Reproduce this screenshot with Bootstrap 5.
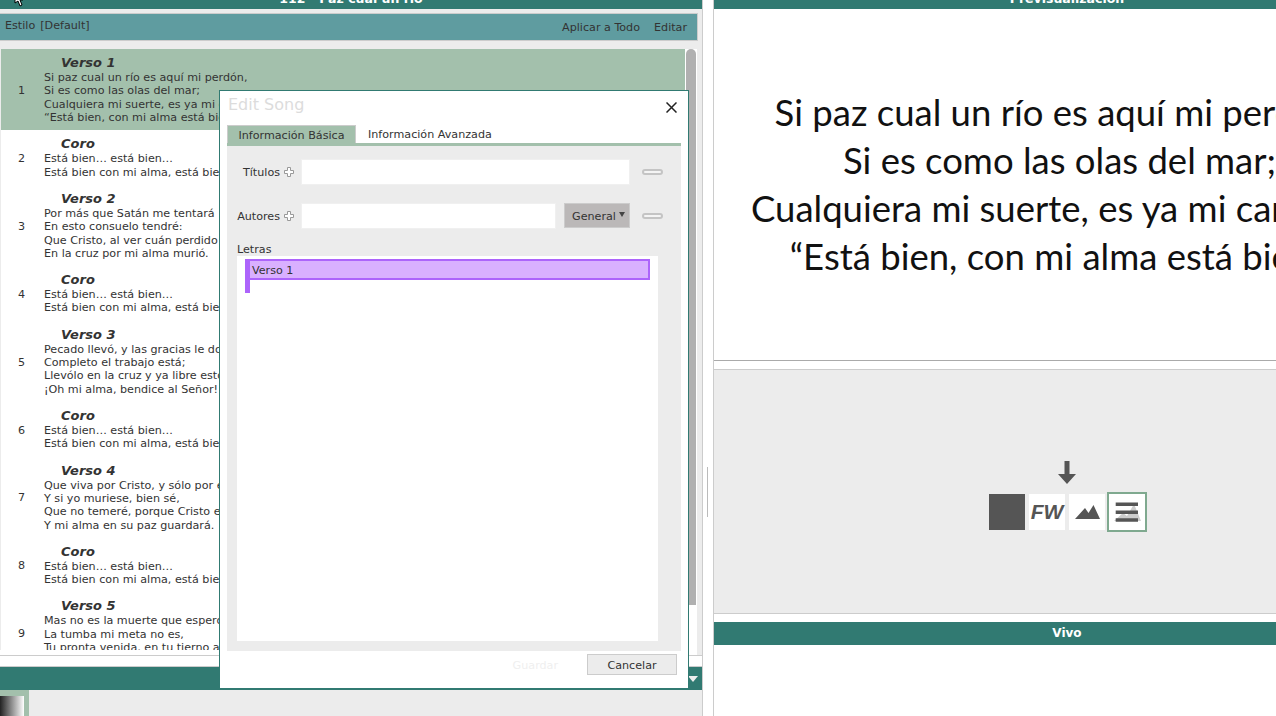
<!DOCTYPE html>
<html lang="es">
<head>
    <meta charset="UTF-8">
    <title>Editor</title>
    <link href="https://cdn.jsdelivr.net/npm/bootstrap@5.3.3/dist/css/bootstrap.min.css" rel="stylesheet">
    <style>
        html, body { height: 716px; overflow: hidden; }
        body { font: 11.15px/13.33px "DejaVu Sans", sans-serif; color: #333; background: #fff; }
        .app-shell { width: 1276px; height: 716px; }
        .left-pane { width: 703px; height: 716px; background: #ececec; border-right: 1px solid #ccc; }
        .splitter { width: 10px; height: 716px; background: #fff; }
        .grip { width: 1px; height: 50px; background: #bbb; margin: 467px 0 0 4px; }
        .right-pane { width: 563px; height: 716px; border-left: 1px solid #ccc; overflow: hidden; }
        .right-inner { width: 706px; }
        .title-strip { height: 9px; background: #317a72; color: #fff; font-weight: 700; font-size: 12.5px; overflow: hidden; padding-bottom: 4px; }
        .style-bar { height: 28px; margin: 4px 4px 8px 0; padding: 5px 10px 0 5px; background: #5f9ca0; border: 1px solid #ccc; border-left: 0; }
        .style-bar .opts { margin-top: 2px; gap: 14px; }
        .style-name { gap: 5px; }
        .song-area { height: 606px; width: 697px; background: #fff; }
        .song-list { width: 686px; height: 601px; overflow: hidden; }
        .song-row { width: 685px; border-left: 1px solid #ececec; }
        .song-row.is-current { background: #a3c0ac; }
        .row-num { width: 43px; padding: 2px 0 0 17px; }
        .row-head { padding-left: 17px; font-size: 13px; font-weight: 700; font-style: italic; line-height: 14px; margin-bottom: 1px; }
        .row-body { padding: 7px 0 5.95px; }
        .row-body .ln { white-space: nowrap; }
        .scroll-track { width: 11px; padding-right: 1px; }
        .scroll-thumb { width: 10px; height: 556px; background: #b0b0b0; border-radius: 5px 5px 0 0; }
        .list-end { height: 11px; background: #fff; border-top: 1px solid #ccc; }
        .teal-strip { height: 24px; background: #317a72; border-top: 1px solid #ccc; }
        .tri-down { width: 0; height: 0; border-left: 5px solid transparent; border-right: 5px solid transparent; border-top: 6px solid #eee; margin-right: 4px; }
        .thumb-box { width: 29px; height: 26px; background: #a3c0ac; padding: 6px 5px 0 0; }
        .thumb-fill { height: 20px; background: linear-gradient(to right, #222, #fff); }
        .edit-box { position: absolute; left: 219px; top: 90px; width: 470px; height: 600px; background: #fff; border: 1px solid #317a72; border-bottom-width: 2px; padding: 0 7px; }
        .edit-title { font-size: 16px; line-height: 20px; color: #dcdcdc; margin: 4px 0 0 1px; }
        .close-x { position: absolute; right: 11px; top: 11px; }
        .tab-row { margin-top: 10px; height: 18px; }
        .tab-on { width: 129px; height: 18px; background: #a3c0ac; border: 1px solid #ccc; border-bottom: 0; text-align: center; padding-top: 3px; }
        .tab-off { padding: 3px 0 0 12px; }
        .form-panel { width: 454px; height: 508px; background: #ececec; border-top: 3px solid #a3c0ac; padding: 13px 10px 10px; }
        .field-line { height: 26px; }
        .field-line + .field-line { margin-top: 18px; }
        .field-lbl { width: 64px; }
        .field-name { width: 43px; text-align: right; padding-top: 1px; }
        .fake-input { height: 26px; background: #fff; border: 1px solid #f0f0f0; }
        .genre-btn { width: 66px; height: 25px; margin-left: 8px; background: #bbb8b8; border: 1px solid #ccc; padding: 6px 0 0 7px; position: relative; }
        .genre-btn::after { content: ""; position: absolute; right: 4px; top: 8px; border-left: 3px solid transparent; border-right: 3px solid transparent; border-top: 5px solid #444; }
        .pill-btn { width: 21px; height: 6px; margin: 0 0 0 12px; background: #f4f4f4; border: 2px solid #c4c4c4; border-radius: 3px; }
        .lyrics-lbl { margin-top: 14px; height: 13px; }
        .lyrics-box { width: 421px; height: 385px; background: #fff; padding: 3px 8px; }
        .verse-flag { width: 405px; }
        .verse-item { height: 21px; background: #d9b0ff; border: 2px solid #ad64fb; border-left-width: 5px; padding: 3px 0 0 2px; }
        .verse-tail { width: 5px; height: 13px; background: #ad64fb; }
        .edit-foot { height: 37px; padding: 3px 4px 0 0; }
        .ghost-btn { color: #efefef; margin: 5px 29px 0 0; }
        .cancel-btn { width: 90px; height: 21px; background: #ececec; border: 1px solid #ccc; text-align: center; padding-top: 4px; }
        .preview-top { height: 352px; overflow: hidden; background: #fff; border-bottom: 1px solid #aaa; }
        .preview-text { width: 691px; margin-top: 79px; text-align: center; font: 36.5px/48px Lato, sans-serif; color: #111; white-space: nowrap; }
        .tools-gap { height: 8px; }
        .tool-panel { height: 245px; background: #ececec; border-top: 1px solid #ccc; border-bottom: 1px solid #ccc; padding-top: 88px; }
        .tool-row { margin-left: 275px; width: 158px; }
        .arrow-slot { height: 36px; padding: 3px 2px 0 0; text-align: center; }
        .tool-tile { width: 36px; height: 36px; background: #fff; margin-right: 4px; }
        .tool-tile.dark { background: #555; }
        .tool-tile.picked { width: 40px; height: 40px; border: 2px solid #7fa98f; margin: -2px 0 -2px -2px; }
        .fw-mark { font: italic 700 21px/36px "Liberation Sans", sans-serif; color: #555; text-align: center; }
        .vivo-bar { height: 23px; margin-top: 8px; background: #317a72; color: #fff; font-weight: 700; font-size: 12px; line-height: 23px; text-align: center; }
        .cursor-mark { position: absolute; left: 14px; top: -9px; }
    </style>
</head>
<body>
<div class="app-shell d-flex position-relative">

    <!-- song list side -->
    <div class="left-pane flex-shrink-0">
        <div class="title-strip d-flex justify-content-center align-items-end"><span class="flex-shrink-0">112 - Paz cual un río</span></div>
        <div class="style-bar d-flex justify-content-between">
            <span class="style-name d-flex"><span>Estilo</span><span>[Default]</span></span>
            <span class="opts d-flex"><span>Aplicar a Todo</span><span>Editar</span></span>
        </div>
        <div class="song-area d-flex">
            <div class="song-list" id="song-list"></div>
            <div class="scroll-track"><div class="scroll-thumb"></div></div>
        </div>
        <div class="list-end"></div>
        <div class="teal-strip d-flex justify-content-end align-items-center"><div class="tri-down"></div></div>
        <div class="thumb-box"><div class="thumb-fill"></div></div>
    </div>

    <div class="splitter flex-shrink-0"><div class="grip"></div></div>

    <!-- preview side -->
    <div class="right-pane flex-shrink-0">
        <div class="right-inner">
            <div class="title-strip d-flex justify-content-center align-items-end"><span class="flex-shrink-0">Previsualización</span></div>
            <div class="preview-top">
                <div class="preview-text">
                    Si paz cual un río es aquí mi perdón,<br>
                    Si es como las olas del mar;<br>
                    Cualquiera mi suerte, es ya mi canción:<br>
                    “Está bien, con mi alma está bien.”
                </div>
            </div>
            <div class="tools-gap"></div>
            <div class="tool-panel">
                <div class="tool-row">
                    <div class="arrow-slot">
                        <svg width="18" height="23" viewBox="0 0 18 23"><path d="M6.500 0h5v13H18l-9 10-9-10h6.500z" fill="#555"/></svg>
                    </div>
                    <div class="d-flex">
                        <div class="tool-tile dark"></div>
                        <div class="tool-tile fw-mark">FW</div>
                        <div class="tool-tile">
                            <svg width="36" height="36" viewBox="0 0 36 36"><path d="M6 25 16 14l3.500 5 5-8L31 25z" fill="#555"/></svg>
                        </div>
                        <div class="tool-tile picked">
                            <svg class="d-block" width="36" height="36" viewBox="0 0 36 36">
                                <path d="M5 27l9-8 4 3 7-12 7 17z" fill="#ccc"/>
                                <path d="M6.700 8.500H29V12H6.700zM6.700 16.500H29V20H6.700zM6.700 24.300H29v3.500H6.700z" fill="#555"/>
                            </svg>
                        </div>
                    </div>
                </div>
            </div>
            <div class="vivo-bar">Vivo</div>
        </div>
    </div>

    <!-- edit song dialog -->
    <div class="edit-box">
        <div class="edit-title">Edit Song</div>
        <svg class="close-x" width="11" height="11" viewBox="0 0 11 11"><path d="M.5.5l10 10M10.500.5l-10 10" stroke="#222" stroke-width="1.500"/></svg>
        <div class="tab-row d-flex">
            <div class="tab-on">Información Básica</div>
            <div class="tab-off">Información Avanzada</div>
        </div>
        <div class="form-panel">
            <div class="field-line d-flex align-items-center">
                <div class="field-lbl d-flex align-items-center"><span class="field-name">Títulos</span>
                    <svg width="10" height="10" viewBox="0 0 10 10" class="ms-1"><path d="M3.500.5h3v3h3v3h-3v3h-3v-3h-3v-3h3z" fill="#fff" stroke="#999"/></svg>
                </div>
                <div class="fake-input" style="width:329px"></div>
                <div class="pill-btn"></div>
            </div>
            <div class="field-line d-flex align-items-center">
                <div class="field-lbl d-flex align-items-center"><span class="field-name">Autores</span>
                    <svg width="10" height="10" viewBox="0 0 10 10" class="ms-1"><path d="M3.500.5h3v3h3v3h-3v3h-3v-3h-3v-3h3z" fill="#fff" stroke="#999"/></svg>
                </div>
                <div class="fake-input" style="width:255px"></div>
                <div class="genre-btn align-self-start">General</div>
                <div class="pill-btn"></div>
            </div>
            <div class="lyrics-lbl">Letras</div>
            <div class="lyrics-box">
                <div class="verse-flag">
                    <div class="verse-item">Verso 1</div>
                    <div class="verse-tail"></div>
                </div>
            </div>
        </div>
        <div class="edit-foot d-flex justify-content-end align-items-start">
            <span class="ghost-btn">Guardar</span>
            <div class="cancel-btn">Cancelar</div>
        </div>
    </div>

    <svg class="cursor-mark" width="10" height="16" viewBox="0 0 10 16"><path d="M1 1v11l3-2 2 5 2-1-2-5h3z" fill="#fff" stroke="#000"/></svg>
</div>

<script>
    const coro = ["Está bien… está bien…", "Está bien con mi alma, está bien"];
    const slides = [
        ["Verso 1", ["Si paz cual un río es aquí mi perdón,", "Si es como las olas del mar;", "Cualquiera mi suerte, es ya mi canción:", "“Está bien, con mi alma está bien.”"]],
        ["Coro", coro],
        ["Verso 2", ["Por más que Satán me tentará", "En esto consuelo tendré:", "Que Cristo, al ver cuán perdido", "En la cruz por mi alma murió."]],
        ["Coro", coro],
        ["Verso 3", ["Pecado llevó, y las gracias le doy", "Completo el trabajo está;", "Llevólo en la cruz y ya libre estoy", "¡Oh mi alma, bendice al Señor!"]],
        ["Coro", coro],
        ["Verso 4", ["Que viva por Cristo, y sólo por él", "Y si yo muriese, bien sé,", "Que no temeré, porque Cristo es", "Y mi alma en su paz guardará."]],
        ["Coro", coro],
        ["Verso 5", ["Mas no es la muerte que espero", "La tumba mi meta no es,", "Tu pronta venida, en tu tierno amor", "Es mi esperanza."]]
    ];
    document.getElementById("song-list").innerHTML = slides.map((s, i) => `
        <div class="song-row d-flex align-items-center ${i === 0 ? "is-current" : ""}">
            <div class="row-num">${i + 1}</div>
            <div class="row-body">
                <div class="row-head">${s[0]}</div>
                ${s[1].map(l => `<div class="ln">${l}</div>`).join("")}
            </div>
        </div>`).join("");
</script>
<script src="https://cdn.jsdelivr.net/npm/bootstrap@5.3.3/dist/js/bootstrap.bundle.min.js"></script>
</body>
</html>
